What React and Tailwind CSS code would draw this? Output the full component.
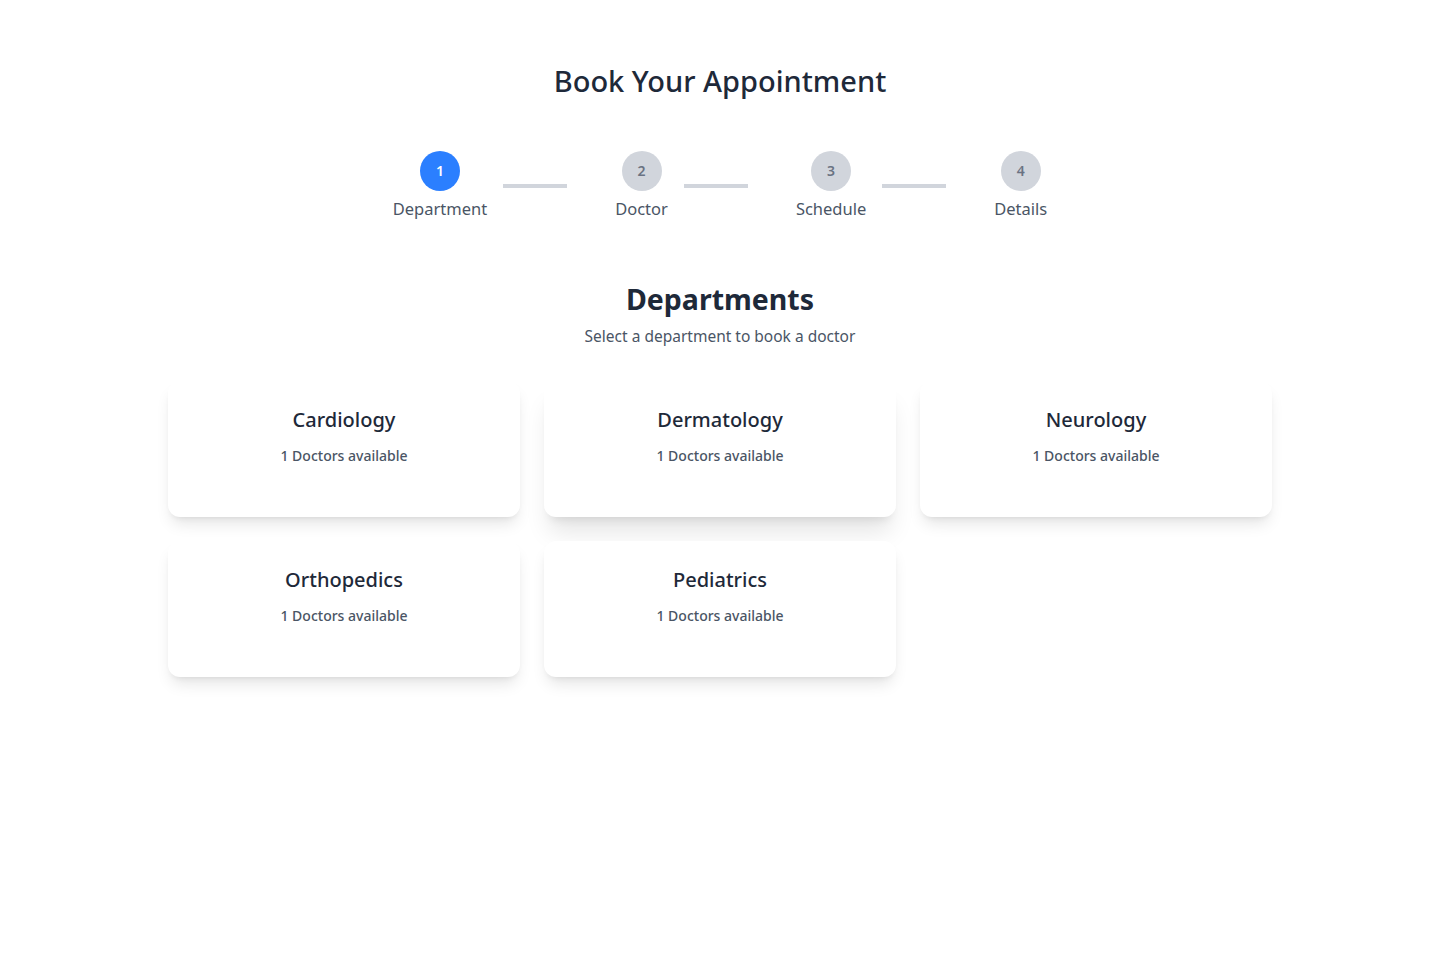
import React from "react";

const steps = ["Department", "Doctor", "Schedule", "Details"];

const departments = [
  { name: "Cardiology", doctors: 1 },
  { name: "Dermatology", doctors: 1, hovered: true },
  { name: "Neurology", doctors: 1 },
  { name: "Orthopedics", doctors: 1 },
  { name: "Pediatrics", doctors: 1 },
];

function Stepper({ current }) {
  return (
    <div className="flex items-center justify-center gap-8">
      {steps.map((label, idx) => (
        <div key={label} className="flex items-center">
          <div className="flex flex-col items-center">
            <div
              className={
                idx + 1 === current
                  ? "w-10 h-10 rounded-full bg-blue-500 text-white flex items-center justify-center text-sm font-semibold"
                  : "w-10 h-10 rounded-full bg-gray-300 text-gray-500 flex items-center justify-center text-sm font-semibold"
              }
            >
              {idx + 1}
            </div>
            <span className="mt-1.5 text-[16.5px] leading-6 text-gray-600">{label}</span>
          </div>
          {idx < steps.length - 1 && <div className="mx-4 w-16 h-1 bg-gray-300" />}
        </div>
      ))}
    </div>
  );
}

export default function App() {
  return (
    <div className="min-h-screen bg-white font-['Noto_Sans',sans-serif] text-gray-800">
      <div className="max-w-6xl mx-auto px-6 pt-[63px] pb-12">
        <h1 className="text-[29px] leading-9 font-medium text-center text-gray-800 mb-[52px]">
          Book Your Appointment
        </h1>

        <Stepper current={1} />

        {/* Departments */}
        <div className="mt-[60px] text-center">
          <h2 className="text-[28.5px] leading-9 font-bold text-gray-800">Departments</h2>
          <p className="mt-[7px] text-[15.5px] leading-6 text-gray-600">Select a department to book a doctor</p>
        </div>

        <div className="mt-[33px] grid grid-cols-3 gap-6">
          {departments.map((dept) => (
            <div
              key={dept.name}
              className={
                dept.hovered
                  ? "h-[136px] bg-white rounded-xl px-6 pt-[25px] text-center shadow-xl"
                  : "h-[136px] bg-white rounded-xl px-6 pt-[25px] text-center shadow-lg"
              }
            >
              <h3 className="text-xl leading-7 font-medium text-gray-800">{dept.name}</h3>
              <p className="mt-3 text-sm leading-5 font-medium text-gray-600">
                {dept.doctors} Doctors available
              </p>
            </div>
          ))}
        </div>
      </div>
    </div>
  );
}
